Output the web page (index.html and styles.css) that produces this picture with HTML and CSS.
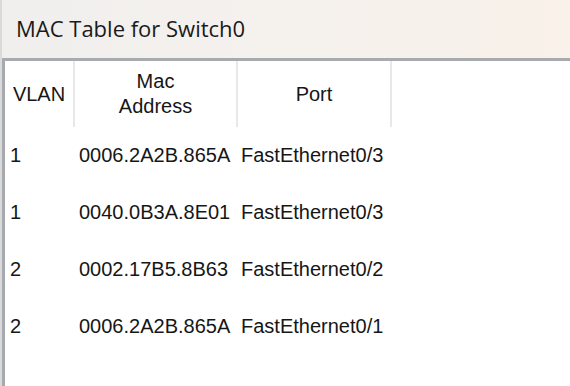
FILE: index.html
```html
<!DOCTYPE html>
<html lang="en">
<head>
<meta charset="utf-8">
<title>MAC Table for Switch0</title>
<link rel="stylesheet" href="styles.css">
</head>
<body>
<div class="window">
  <div class="titlebar">MAC Table for Switch0</div>
  <div class="frame">
    <div class="table">
      <div class="th c-vlan">VLAN</div>
      <div class="th c-mac">Mac<br>Address</div>
      <div class="th c-port">Port</div>
      <div class="th c-fill"></div>

      <div class="td c-vlan">1</div>
      <div class="td c-mac">0006.2A2B.865A</div>
      <div class="td c-port">FastEthernet0/3</div>
      <div class="td c-fill"></div>

      <div class="td c-vlan">1</div>
      <div class="td c-mac">0040.0B3A.8E01</div>
      <div class="td c-port">FastEthernet0/3</div>
      <div class="td c-fill"></div>

      <div class="td c-vlan">2</div>
      <div class="td c-mac">0002.17B5.8B63</div>
      <div class="td c-port">FastEthernet0/2</div>
      <div class="td c-fill"></div>

      <div class="td c-vlan">2</div>
      <div class="td c-mac">0006.2A2B.865A</div>
      <div class="td c-port">FastEthernet0/1</div>
      <div class="td c-fill"></div>
    </div>
  </div>
</div>
</body>
</html>
```

FILE: styles.css
```css
html, body {
  margin: 0;
  padding: 0;
  background: #ffffff;
}

body {
  width: 570px;
  height: 386px;
  overflow: hidden;
}

.window {
  display: flex;
  flex-direction: column;
  height: 386px;
  border-left: 2px solid #dadada;
  box-sizing: border-box;
}

.titlebar {
  height: 58px;
  flex: none;
  box-sizing: border-box;
  padding: 14px 0 0 14px;
  background: linear-gradient(to right, #f0efed 0%, #f5f1ed 45%, #f9f1ea 100%);
  font-family: "Open Sans", "Noto Sans", sans-serif;
  font-size: 22px;
  line-height: 28px;
  color: #1a1a1a;
}

.frame {
  flex: 1;
  border-top: 3px solid #a7abb0;
  border-left: 3px solid #a7abb0;
  background: #ffffff;
}

.table {
  display: grid;
  grid-template-columns: 70px 163px 154px 1fr;
  grid-template-rows: 66px repeat(4, 57px);
  font-family: "Liberation Sans", Arial, sans-serif;
  font-size: 20px;
  color: #161616;
}

.th {
  display: flex;
  align-items: center;
  justify-content: center;
  text-align: center;
  line-height: 25px;
  border-right: 2px solid #e8e8e8;
}

.th.c-fill {
  border-right: none;
}

.td {
  display: flex;
  align-items: center;
  white-space: nowrap;
}

.td.c-vlan {
  padding-left: 5px;
}

.td.c-mac {
  padding-left: 4px;
}

.td.c-port {
  padding-left: 3px;
}
```
